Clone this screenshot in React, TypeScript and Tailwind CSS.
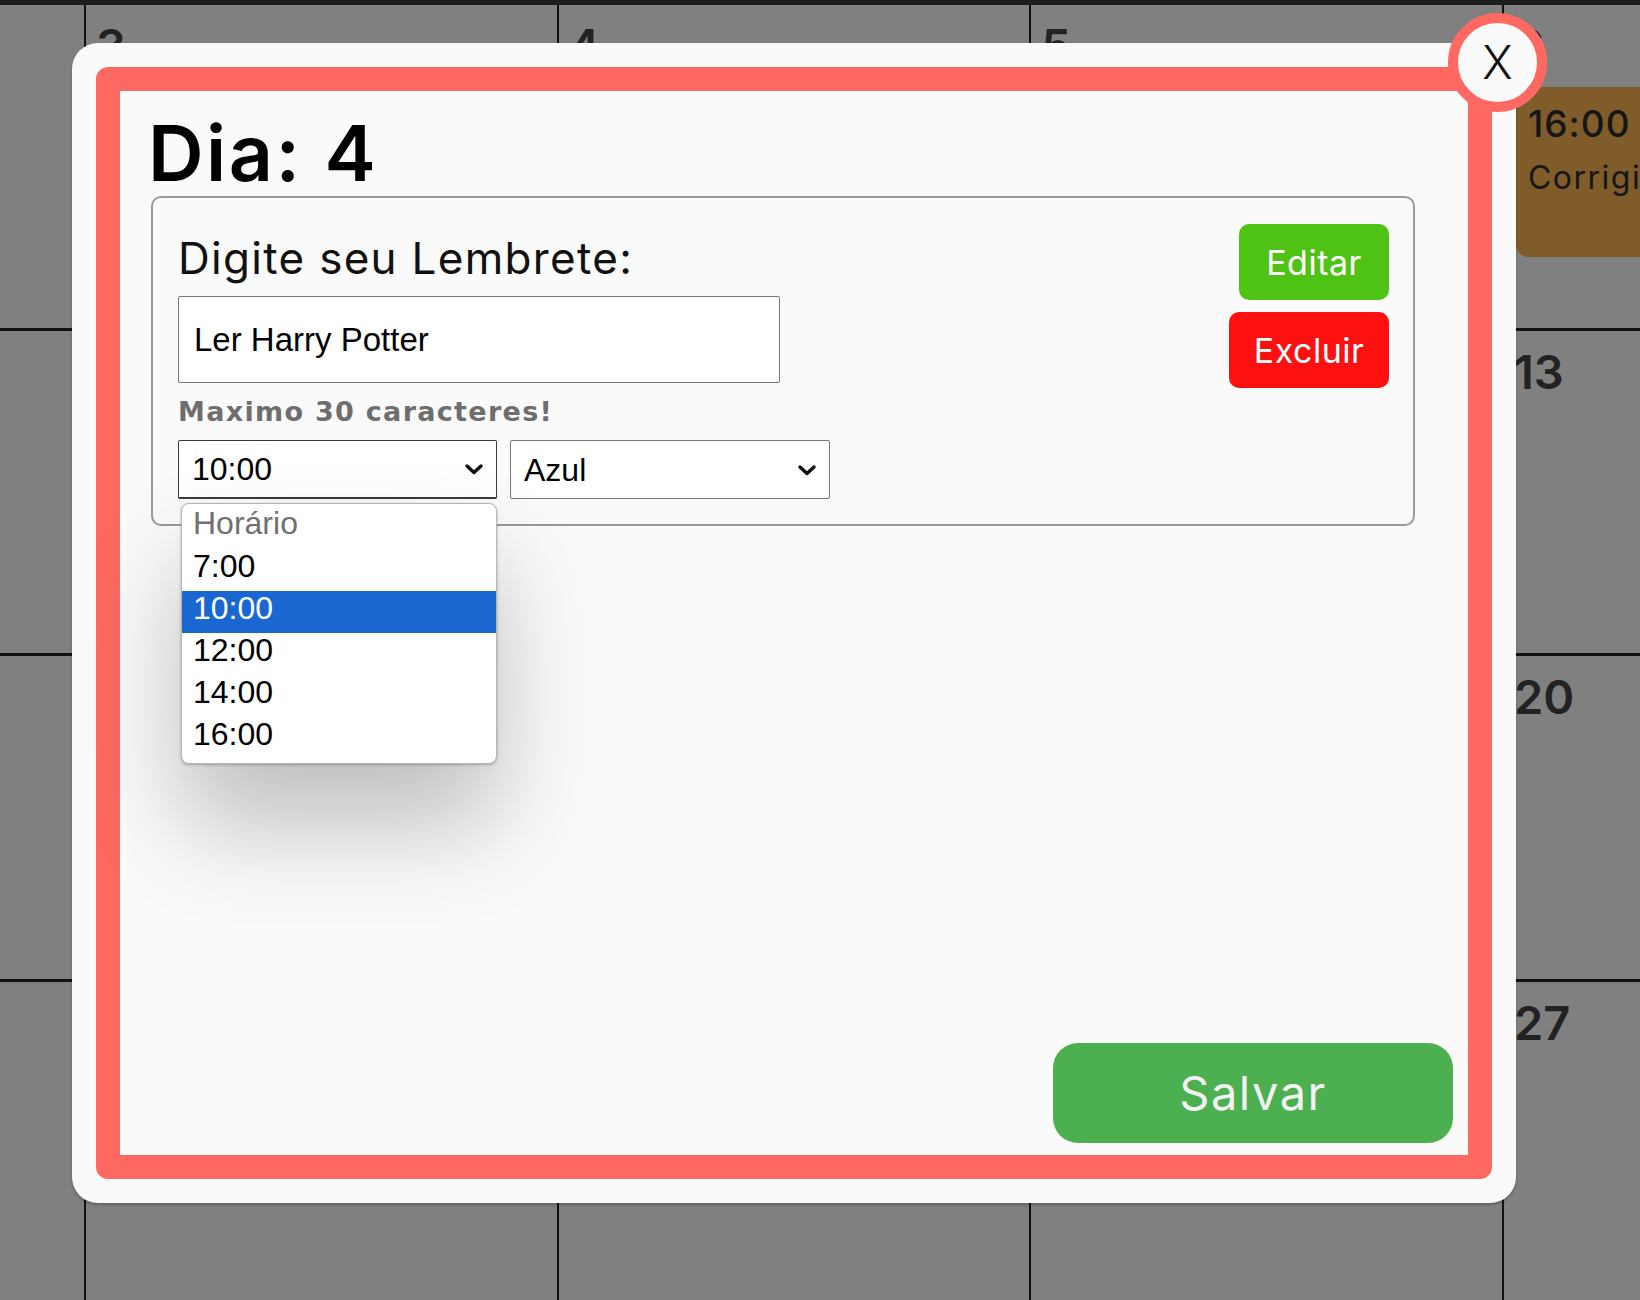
import React from 'react';

const SANS = "font-['Inter',sans-serif]";
const WIDE = "font-['DejaVu_Sans',sans-serif]";
const ARIAL = "font-['Liberation_Sans',Arial,sans-serif]";

const horarios = ['7:00', '10:00', '12:00', '14:00', '16:00'];

const Chevron: React.FC = () => (
  <svg width="20" height="12" viewBox="0 0 20 12" fill="none">
    <path d="M3 3l7 6.5L17 3" stroke="#111" strokeWidth="3.5" strokeLinecap="round" strokeLinejoin="round" />
  </svg>
);

const DayCell: React.FC<{ day: number }> = ({ day }) => (
  <div className="w-[472.67px] shrink-0 border-l-2 border-[#111] pl-[10px] pt-[17px]">
    {day <= 31 && (
      <div className={`${SANS} text-[47px] leading-none font-semibold text-[#222]`}>{day}</div>
    )}
    {day === 6 && (
      <div className="mt-[18px] ml-[2px] h-[170px] w-[440px] rounded-[12px] bg-[#7f5c29] pl-[12px] pt-[18px] text-[#161616]">
        <div className={`${SANS} text-[37px] leading-none font-medium tracking-[1px]`}>16:00</div>
        <div className={`${SANS} mt-[20px] text-[32px] leading-none tracking-[1.5px]`}>Corrigir provas</div>
      </div>
    )}
  </div>
);

const Calendar: React.FC = () => {
  const rows = [0, 1, 2, 3, 4];
  return (
    <div>
      <div className="h-[5px] bg-[#1c1c1c]" />
      {rows.map((r) => (
        <div key={r} className="flex h-[325.5px] ml-[-861.33px] border-b-[3px] border-[#111]">
          {[0, 1, 2, 3, 4, 5, 6].map((c) => (
            <DayCell key={c} day={r * 7 + c + 1} />
          ))}
        </div>
      ))}
    </div>
  );
};

const App: React.FC = () => {
  return (
    <div className="relative w-full h-[1300px] overflow-hidden bg-[#808080]">
      <Calendar />

      {/* Modal */}
      <div className="absolute left-[72px] top-[43px] w-[1444px] h-[1160px] rounded-[26px] bg-[#fafafa] p-6 shadow-[0_2px_3px_rgba(0,0,0,0.25)]">
        <div className="h-full rounded-[12px] border-[24px] border-[#ff6961]">
          <div className="flex h-full flex-col bg-[#fafafa] pl-[31px] pr-[15px] pb-[12px] pt-[24px]">
            <h1 className={`${SANS} -ml-[3px] text-[77px] leading-none font-semibold tracking-[2.5px] text-black`}>Dia: 4</h1>

            <div className="mt-[4px] flex w-[1264px] justify-between rounded-[10px] border-2 border-[#9a9a9a] pl-[25px] pr-[24px] pt-[26px] pb-[25px]">
              <div className="mt-[12px]">
                <div className={`${SANS} text-[44px] leading-none tracking-[1.3px] text-[#111]`}>Digite seu Lembrete:</div>
                <div className={`${ARIAL} mt-[16px] flex h-[87px] w-[602px] items-center rounded-[2px] border border-[#767676] bg-white pl-[15px] text-[33px] text-black`}>
                  Ler Harry Potter
                </div>
                <div className={`${WIDE} mt-[15px] text-[27px] leading-none font-bold tracking-[1.3px] text-[#6e6e6e]`}>Maximo 30 caracteres!</div>
                <div className="mt-[15px] flex gap-[13px]">
                  <div className="relative">
                    <div className={`${ARIAL} flex h-[59px] w-[319px] items-center justify-between rounded-[2px] border border-b-2 border-[#3a3a3a] bg-white pl-[13px] pr-[12px] text-[32px] text-black`}>
                      <span>10:00</span>
                      <Chevron />
                    </div>
                    {/* open native dropdown */}
                    <div className="absolute left-[3px] top-[63px] z-10 w-[316px] rounded-[8px] border border-[#b5b5b5] bg-white pt-[3px] pb-[4px] shadow-[0_1px_3px_rgba(0,0,0,0.25),0_60px_100px_rgba(0,0,0,0.24)]">
                      <div className={`${ARIAL} h-[42px] px-[11px] text-[32px] leading-[32px] text-[#707070]`}>Horário</div>
                      {horarios.map((h) => (
                        <div
                          key={h}
                          className={`${ARIAL} h-[42px] px-[11px] text-[32px] leading-[34px] ${h === '10:00' ? 'bg-[#1a67d2] text-white' : 'text-black'}`}
                        >
                          {h}
                        </div>
                      ))}
                    </div>
                  </div>
                  <div className={`${ARIAL} flex h-[59px] w-[320px] items-center justify-between rounded-[2px] border border-[#767676] bg-white pl-[13px] pr-[12px] text-[32px] text-black`}>
                    <span>Azul</span>
                    <Chevron />
                  </div>
                </div>
              </div>

              <div className="flex flex-col items-end gap-[12px]">
                <button className={`${SANS} h-[76px] w-[150px] rounded-[10px] bg-[#4fc314] text-[34px] tracking-[0.5px] text-white`}>Editar</button>
                <button className={`${SANS} h-[76px] w-[160px] rounded-[10px] bg-[#fc1010] text-[34px] tracking-[0.5px] text-white`}>Excluir</button>
              </div>
            </div>

            <button className={`${SANS} mt-auto self-end h-[100px] w-[400px] rounded-[25px] bg-[#4caf50] text-[47px] tracking-[1.5px] text-[#f2f2f2]`}>
              Salvar
            </button>
          </div>
        </div>

        {/* close button */}
        <button className={`${SANS} absolute left-[1376px] top-[-30px] flex h-[99px] w-[99px] items-center justify-center rounded-full border-[10px] border-[#ff6961] bg-[#fafafa] text-[46px] font-light text-[#111]`}>
          X
        </button>
      </div>
    </div>
  );
};

export default App;
